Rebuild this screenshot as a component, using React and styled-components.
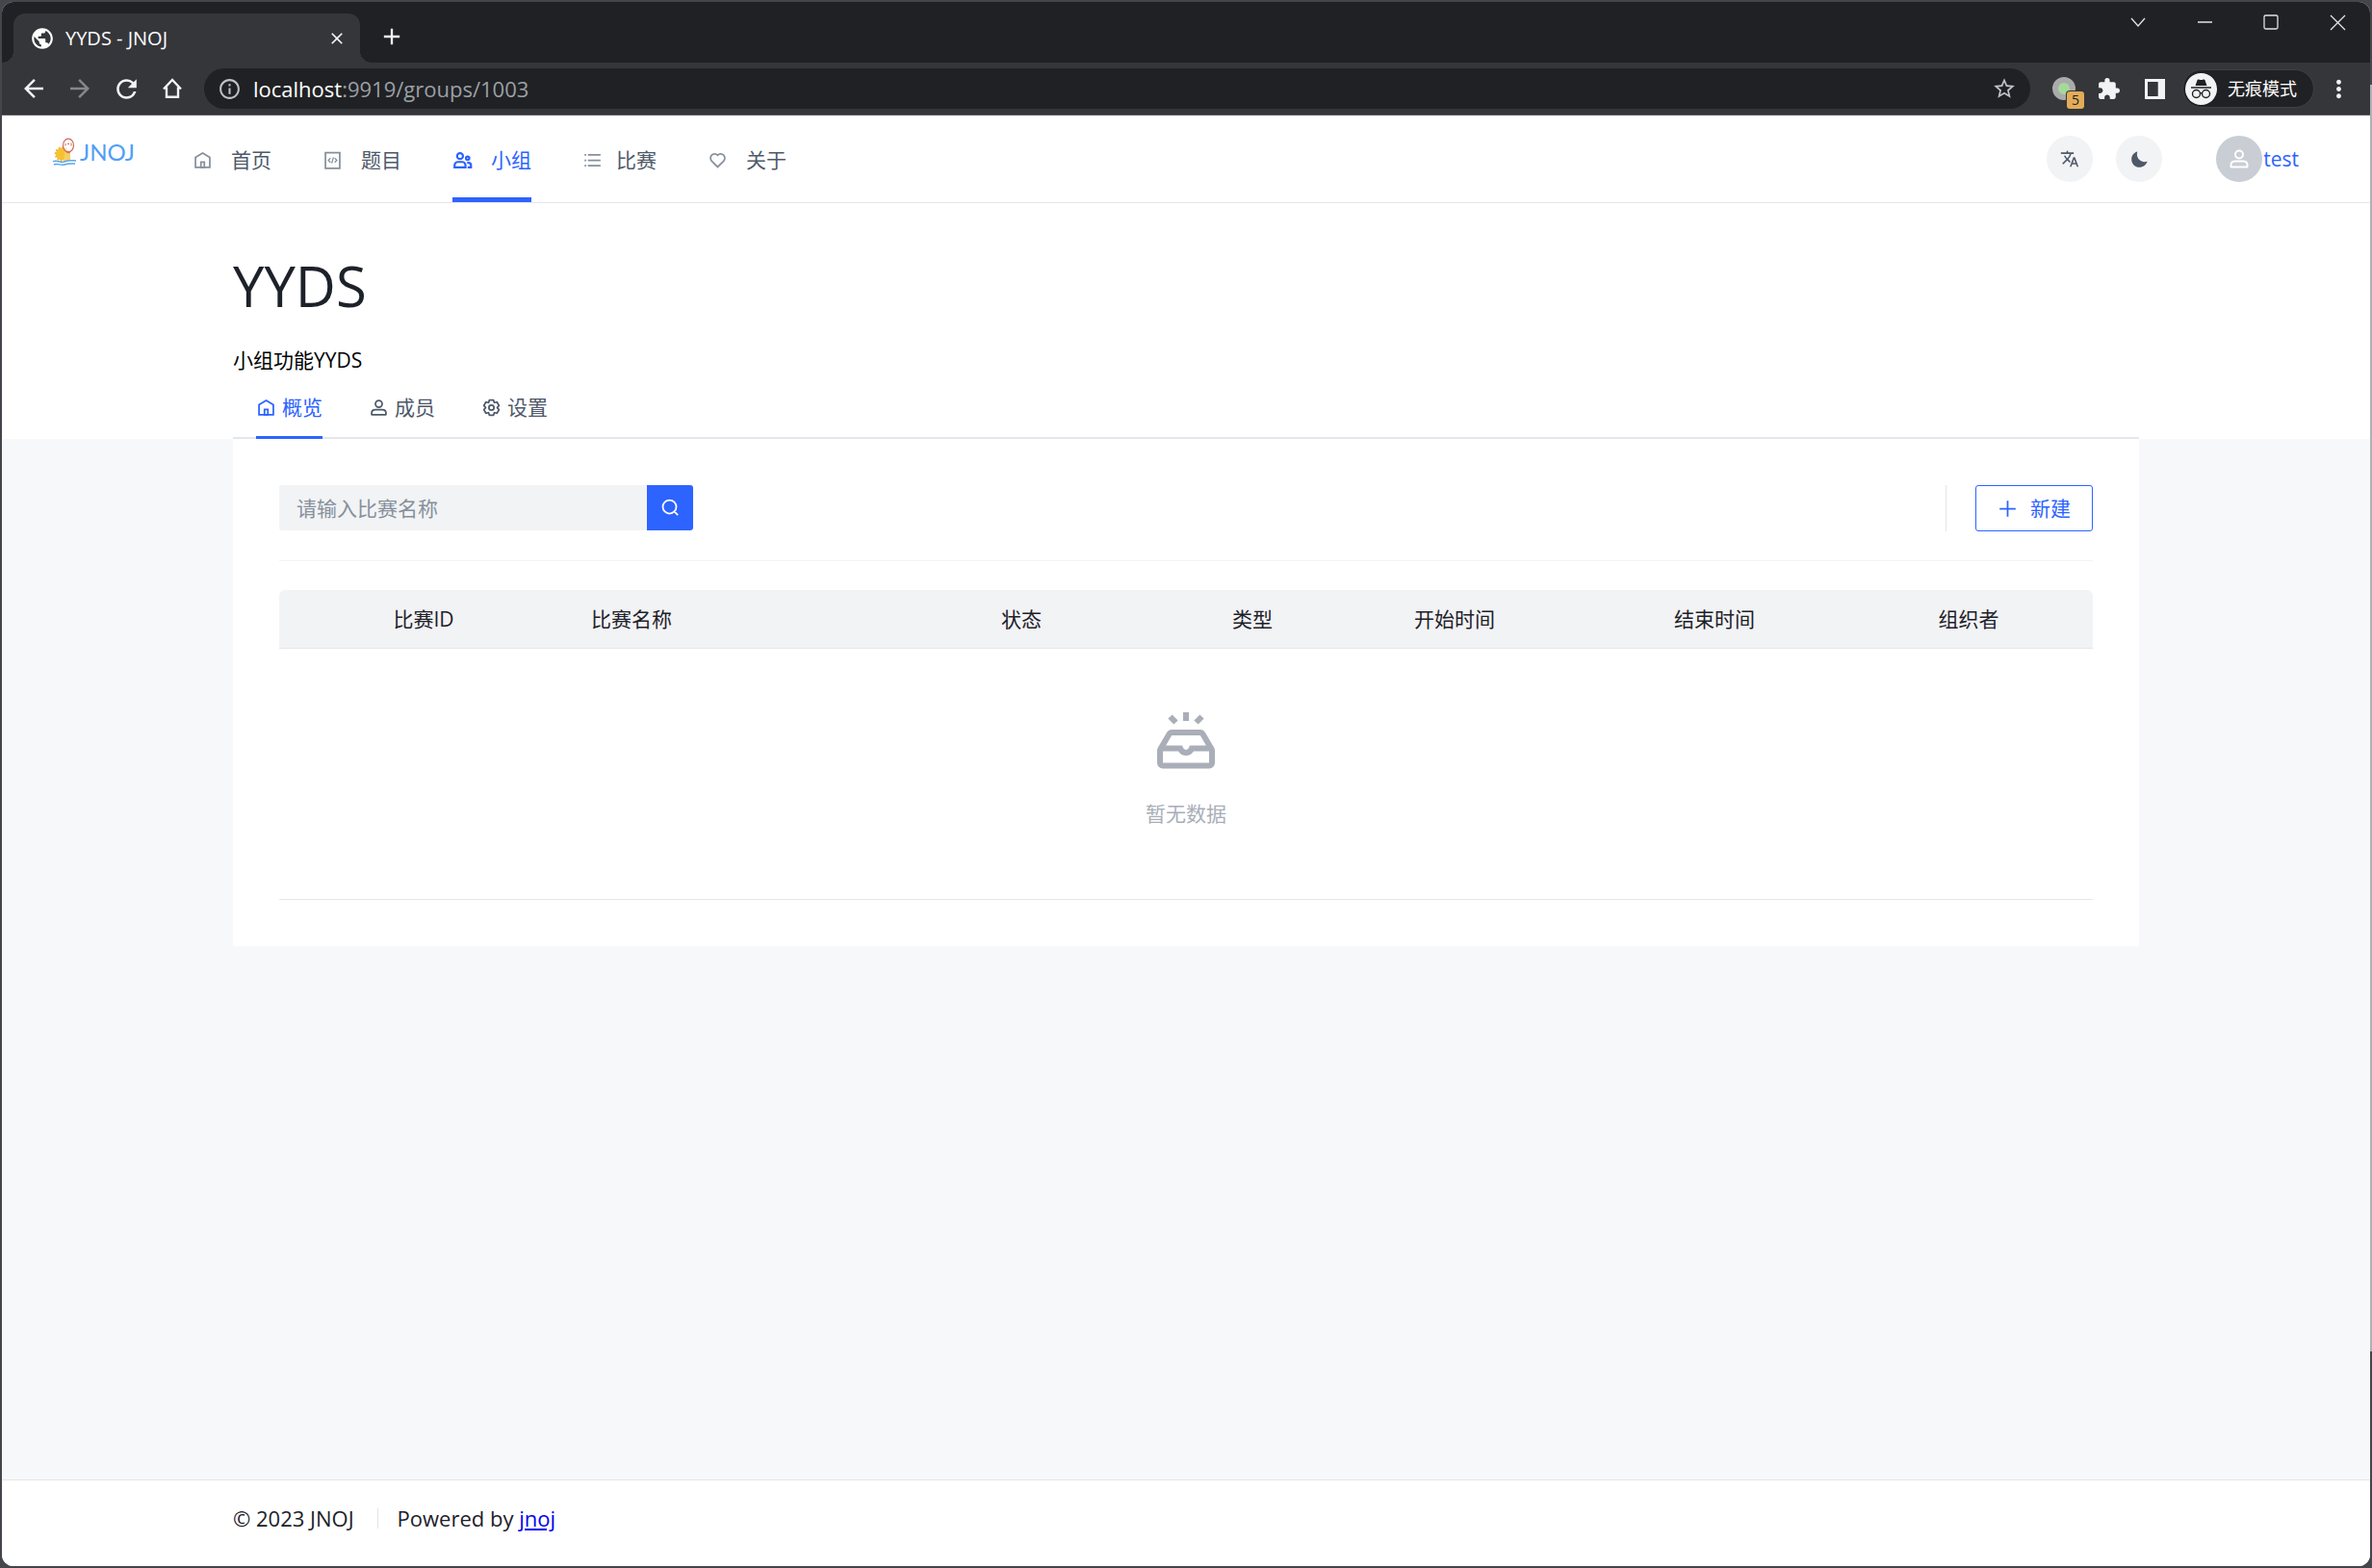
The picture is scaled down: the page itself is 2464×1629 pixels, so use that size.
import React, { useState } from 'react';
import styled, { createGlobalStyle } from 'styled-components';
import {
  MdArrowBack, MdArrowForward, MdRefresh, MdInfoOutline, MdStarBorder,
  MdExtension, MdPublic, MdTranslate, MdMoreVert, MdClose, MdAdd,
} from 'react-icons/md';

const GlobalStyle = createGlobalStyle`
  *, *::before, *::after { box-sizing: border-box; }
  body {
    margin: 0;
    background: #45464b;
    color: #1d2129;
    font-family: "Open Sans", "Noto Sans CJK SC", sans-serif;
    font-size: 21px;
    line-height: 32px;
  }
  button, input { font: inherit; color: inherit; border: 0; padding: 0; margin: 0; background: none; }
  button { cursor: pointer; }
  a { color: inherit; text-decoration: none; }
  svg { display: block; flex: none; }
  h1, p, ul { margin: 0; padding: 0; font-weight: 400; }
  ul { list-style: none; }
`;

/* ---------- window frame ---------- */

const Frame = styled.div`
  min-height: 100vh;
  padding: 2px;
  display: flex;
  background:
    linear-gradient(#47484c 88px, #b0b1b3 88px, #b0b1b3 1404px, #45464b 1404px) right top / 2px 100% no-repeat,
    #45464b;
`;

const BrowserWindow = styled.div`
  flex: 1;
  min-width: 0;
  display: flex;
  flex-direction: column;
  border-radius: 12px;
  overflow: hidden;
  background: #f7f8fa;
`;

const TabStrip = styled.div`
  height: 63px;
  padding: 12px 0 0 12px;
  display: flex;
  align-items: flex-start;
  background: #202124;
  color: #fff;
`;

const BrowserTab = styled.div`
  position: relative;
  width: 360px;
  height: 51px;
  padding: 0 14px 0 17px;
  display: flex;
  align-items: center;
  gap: 11px;
  border-radius: 12px 12px 0 0;
  background: #35363a;
  font-size: 20px;
  &::before, &::after {
    content: "";
    position: absolute;
    bottom: 0;
    width: 12px;
    height: 12px;
  }
  &::before {
    right: 100%;
    background: radial-gradient(circle at 0 0, #202124 12px, #35363a 12px);
  }
  &::after {
    left: 100%;
    background: radial-gradient(circle at 100% 0, #202124 12px, #35363a 12px);
  }
`;

const TabTitle = styled.span`
  flex: 1;
`;

const ChromeButton = styled.button`
  width: ${(p) => p.$width || 48}px;
  height: ${(p) => p.$height || 48}px;
  display: flex;
  align-items: center;
  justify-content: center;
  color: ${(p) => (p.$dim ? '#86878a' : '#f1f3f4')};
`;

const NewTab = styled(ChromeButton)`
  margin-left: 9px;
`;

const WindowControls = styled.div`
  margin-left: auto;
  display: flex;
  align-items: center;
  height: 18px;
`;

const Toolbar = styled.div`
  height: 55px;
  padding: 0 16px 0 9px;
  display: flex;
  align-items: center;
  background: #35363a;
  border-bottom: 1px solid #5b5c60;
`;

const AddressBar = styled.div`
  flex: 1;
  height: 42px;
  margin: 0 14px 0 9px;
  padding: 0 14px;
  display: flex;
  align-items: center;
  gap: 12px;
  border-radius: 21px;
  background: #202124;
  color: #9aa0a6;
  font-size: 22px;
  svg { color: #bdc1c6; }
`;

const Address = styled.span`
  flex: 1;
  b { font-weight: 400; color: #fff; }
`;

const Extension = styled.span`
  position: relative;
  width: 24px;
  height: 24px;
  margin: 0 10px 0 9px;
  border: 6px solid #aaa;
  border-radius: 50%;
  background: #a5d99b;
`;

const ExtensionBadge = styled.span`
  position: absolute;
  left: 9px;
  top: 9px;
  width: 18px;
  height: 18px;
  border-radius: 3px;
  background: #e3ac58;
  box-shadow: 0 0 0 1px #35363a;
  color: #202124;
  font-size: 14px;
  line-height: 18px;
  text-align: center;
`;

const ProfilePill = styled.button`
  height: 40px;
  margin: 0 8px 0 5px;
  padding: 0 17px 0 2px;
  display: flex;
  align-items: center;
  gap: 11px;
  border: 1px solid #3f4045;
  border-radius: 20px;
  background: #202124;
  color: #fff;
  font-size: 18px;
  white-space: nowrap;
`;

/* ---------- site header ---------- */

const SiteHeader = styled.header`
  height: 91px;
  padding: 0 74px 0 52px;
  display: flex;
  align-items: center;
  background: #fff;
  border-bottom: 1px solid #e5e6eb;
`;

const Logo = styled.a`
  width: 88px;
  height: 56px;
  align-self: flex-start;
  margin: 10px 58px 0 0;
  display: flex;
  align-items: center;
  gap: 2px;
  color: #4f9ef8;
  font-family: Lato, sans-serif;
  font-size: 24px;
`;

const Nav = styled.nav`
  display: flex;
  align-self: stretch;
  gap: 53px;
`;

const NavLink = styled.a`
  display: flex;
  align-items: center;
  gap: ${(p) => (p.$tight ? 14 : 19)}px;
  padding-top: 7px;
  border-bottom: 5px solid ${(p) => (p.$active ? '#2d63ff' : 'transparent')};
  color: ${(p) => (p.$active ? '#2d63ff' : '#4e5969')};
  svg { color: ${(p) => (p.$active ? '#2d63ff' : '#86909c')}; }
`;

const HeaderTools = styled.div`
  margin-left: auto;
  display: flex;
  align-items: center;
  gap: 24px;
`;

const RoundButton = styled.button`
  width: 48px;
  height: 48px;
  display: flex;
  align-items: center;
  justify-content: center;
  border-radius: 50%;
  background: #f2f3f5;
  color: #4e5969;
`;

const UserLink = styled.a`
  margin-left: 32px;
  display: flex;
  align-items: center;
  gap: 1px;
  color: #2d63ff;
`;

const Avatar = styled.span`
  width: 48px;
  height: 48px;
  display: flex;
  align-items: center;
  justify-content: center;
  border-radius: 50%;
  background: #c9cdd4;
  color: #fff;
`;

/* ---------- page ---------- */

const Container = styled.div`
  width: 100%;
  max-width: 1980px;
  margin: 0 auto;
`;

const GroupHead = styled.section`
  background: #fff;
  padding-top: 48px;
`;

const GroupTitle = styled.h1`
  font-size: 58px;
  line-height: 76px;
`;

const GroupNote = styled.p`
  margin-top: 23px;
  color: #000;
`;

const Tabs = styled.div`
  height: 66px;
  padding: 0 24px;
  display: flex;
  gap: 48px;
  box-shadow: inset 0 -2px #e5e6eb;
`;

const TabButton = styled.button`
  display: flex;
  align-items: center;
  gap: 6px;
  padding-top: 3px;
  border-bottom: 3px solid ${(p) => (p.$active ? '#2d63ff' : 'transparent')};
  color: ${(p) => (p.$active ? '#2d63ff' : '#4e5969')};
`;

const Panel = styled.main`
  padding: 48px;
  background: #fff;
`;

const Actions = styled.div`
  display: flex;
  justify-content: space-between;
  padding-bottom: 30px;
  border-bottom: 1px solid #f2f3f5;
`;

const SearchForm = styled.form`
  width: 430px;
  height: 47px;
  display: flex;
`;

const SearchInput = styled.input`
  flex: 1;
  min-width: 0;
  padding: 0 18px;
  border-radius: 3px 0 0 3px;
  background: #f2f3f5;
  outline: none;
  &::placeholder { color: #86909c; opacity: 1; }
`;

const SearchButton = styled.button`
  width: 48px;
  display: flex;
  align-items: center;
  justify-content: center;
  border-radius: 0 3px 3px 0;
  background: #2d63ff;
  color: #fff;
`;

const CreateArea = styled.div`
  padding-left: 30px;
  border-left: 1px solid #e5e6eb;
`;

const CreateButton = styled.button`
  height: 48px;
  padding: 0 22px;
  display: flex;
  align-items: center;
  gap: 13px;
  border: 1px solid #2d63ff;
  border-radius: 3px;
  color: #2d63ff;
`;

const Table = styled.table`
  width: 100%;
  margin-top: 30px;
  table-layout: fixed;
  border-collapse: separate;
  border-spacing: 0;
`;

const HeadCell = styled.th`
  height: 61px;
  padding: 0 24px;
  background: #f2f3f5;
  border-bottom: 1px solid #e5e6eb;
  font-weight: 400;
  text-align: ${(p) => (p.$left ? 'left' : 'center')};
  &:first-child { border-top-left-radius: 6px; }
  &:last-child { border-top-right-radius: 6px; }
`;

const EmptyCell = styled.td`
  height: 261px;
  padding: 60px 0 0;
  border-bottom: 1px solid #e5e6eb;
  color: #a9aeb8;
  vertical-align: top;
`;

const Empty = styled.div`
  display: flex;
  flex-direction: column;
  align-items: center;
  gap: 23px;
`;

const Footer = styled.footer`
  margin-top: auto;
  height: 90px;
  padding-top: 23px;
  background: #fff;
  border-top: 1px solid #e5e6eb;
  font-size: 22px;
`;

const FooterRow = styled(Container)`
  display: flex;
  align-items: center;
`;

const FooterDivider = styled.span`
  width: 1px;
  height: 21px;
  margin: 0 20px 0 24px;
  background: #e5e6eb;
`;

const FooterLink = styled.a`
  color: #0000ee;
  text-decoration: underline;
`;

/* ---------- icons ---------- */

const Line = ({ size = 21, children, stroke = 4 }) => (
  <svg width={size} height={size} viewBox="0 0 48 48" fill="none" stroke="currentColor" strokeWidth={stroke} aria-hidden="true">
    {children}
  </svg>
);

const HomeIcon = () => <Line><path d="M7 17 24 7l17 10v24H7V17Z" /><path d="M20 28h8v13h-8V28Z" /></Line>;
const CodeIcon = () => (
  <Line><path d="M7 6h34v37H7z" /><path strokeWidth="3" d="m19 19-5 5 5 5M29 19l5 5-5 5M26 17l-4 14" /></Line>
);
const GroupIcon = () => (
  <Line stroke={5}>
    <circle cx="18" cy="14" r="7" /><circle cx="36" cy="19" r="4" />
    <path d="M5 36a8 8 0 0 1 8-8h10a8 8 0 0 1 8 8v5H5v-5ZM35 30h3a6 6 0 0 1 6 6v5h-8" />
  </Line>
);
const ListIcon = () => <Line><path d="M13 24h30M5 11h4m4 26h30M13 11h30M5 24h4M5 37h4" /></Line>;
const HeartIcon = () => (
  <Line><path d="M38.083 11.912a9.802 9.802 0 0 1 0 13.863L24 39.858 9.917 25.775A9.802 9.802 0 1 1 23.78 11.912l.22.22.22-.22a9.802 9.802 0 0 1 13.863 0Z" /></Line>
);
const UserIcon = ({ size }) => (
  <Line size={size}>
    <path d="M7 37c0-4.97 4.03-8 9-8h16c4.97 0 9 3.03 9 8v3a1 1 0 0 1-1 1H8a1 1 0 0 1-1-1v-3Z" />
    <circle cx="24" cy="15" r="8" />
  </Line>
);
const GearIcon = () => (
  <Line>
    <path d="M18.797 6.732A1 1 0 0 1 19.76 6h8.48a1 1 0 0 1 .964.732l1.285 4.628a1 1 0 0 0 1.213.7l4.651-1.2a1 1 0 0 1 1.116.468l4.24 7.344a1 1 0 0 1-.153 1.2L38.193 23.3a1 1 0 0 0 0 1.402l3.364 3.427a1 1 0 0 1 .153 1.2l-4.24 7.344a1 1 0 0 1-1.116.468l-4.65-1.2a1 1 0 0 0-1.214.7l-1.285 4.628a1 1 0 0 1-.964.732h-8.48a1 1 0 0 1-.963-.732L17.51 36.64a1 1 0 0 0-1.213-.7l-4.65 1.2a1 1 0 0 1-1.116-.468l-4.24-7.344a1 1 0 0 1 .153-1.2L9.809 24.7a1 1 0 0 0 0-1.402l-3.364-3.427a1 1 0 0 1-.153-1.2l4.24-7.344a1 1 0 0 1 1.116-.468l4.65 1.2a1 1 0 0 0 1.213-.7l1.286-4.628Z" />
    <circle cx="24" cy="24" r="6" />
  </Line>
);
const SearchIcon = () => (
  <Line><path d="M33.072 33.071c6.248-6.248 6.248-16.379 0-22.627-6.249-6.249-16.38-6.249-22.628 0-6.248 6.248-6.248 16.379 0 22.627 6.248 6.248 16.38 6.248 22.628 0Zm0 0 8.485 8.485" /></Line>
);
const PlusIcon = () => <Line><path d="M5 24h38M24 5v38" /></Line>;
const EmptyIcon = () => (
  <Line size={72}>
    <path d="M24 4v6m7 1 4-4m-18 4-4-4m28.500 22H28s-1 3-4 3-4-3-4-3H6.500M40 41H8a2 2 0 0 1-2-2v-8.460a2 2 0 0 1 .272-1.007l6.150-10.540A2 2 0 0 1 14.148 18H33.850a2 2 0 0 1 1.728.992l6.149 10.541A2 2 0 0 1 42 30.541V39a2 2 0 0 1-2 2Z" />
  </Line>
);
const MoonIcon = () => (
  <svg width="21" height="21" viewBox="0 0 48 48" fill="currentColor" aria-hidden="true">
    <path d="M42.108 29.769c.124-.387-.258-.736-.645-.613A17.99 17.99 0 0 1 36 30c-9.941 0-18-8.059-18-18 0-1.904.296-3.74.844-5.463.123-.387-.226-.769-.613-.645C10.558 8.334 5 15.518 5 24c0 10.493 8.507 19 19 19 8.482 0 15.666-5.558 18.108-13.231Z" />
  </svg>
);
const BrowserHomeIcon = () => (
  <svg width="20" height="22" viewBox="0 0 20 22" fill="none" stroke="currentColor" strokeWidth="2.4" aria-hidden="true">
    <path d="M1 11.5 10 2l9 9.5M4 9.5V19.800h12V9.500" />
  </svg>
);
const SidePanelIcon = () => (
  <svg width="21" height="21" viewBox="0 0 21 21" aria-hidden="true">
    <path fill="currentColor" fillRule="evenodd" d="M0 0h21v21H0zM3 3v15h11V3z" />
    <path fill="#6b6c70" d="M13 3h1v15h-1z" />
  </svg>
);
const IncognitoIcon = () => (
  <svg width="33" height="33" viewBox="0 0 33 33" aria-hidden="true">
    <circle cx="16.500" cy="16.500" r="16.500" fill="#f1f3f4" />
    <path fill="#202124" d="M12.500 7.200c.2-.7 1-.9 1.600-.6l1.400.5h2l1.400-.5c.6-.3 1.400-.1 1.600.6l2 5.800h-12zM6 14.200h21v1.500H6z" />
    <g fill="none" stroke="#202124" strokeWidth="1.400">
      <circle cx="11.500" cy="21.500" r="4" /><circle cx="21.500" cy="21.500" r="4" />
      <path d="M15.500 21c.7-.5 1.300-.5 2 0" />
    </g>
  </svg>
);
const ControlIcon = ({ d, square }) => (
  <svg width="18" height="18" viewBox="0 0 18 18" fill="none" stroke="#e4e4e5" strokeWidth="1.300" aria-hidden="true">
    {square ? <rect x="2" y="2" width="14" height="14" rx="1.500" /> : <path d={d} />}
  </svg>
);
const LogoMark = () => (
  <svg width="27" height="30" viewBox="0 0 27 30" aria-hidden="true">
    <circle cx="10.500" cy="17" r="6.500" fill="#f6c033" />
    <circle cx="10.500" cy="17" r="6.800" fill="none" stroke="#f3b62b" strokeWidth="2" strokeDasharray="2 1.500" />
    <path d="M13 15h6v9h-7z" fill="#f6cf62" />
    <ellipse cx="17" cy="8" rx="5.500" ry="6.800" fill="#fff" fillOpacity=".65" stroke="#d0695e" strokeWidth="1.200" />
    <path d="M14 6v2.500M16 6.500h2M20 5.500v3M15 15c1 1 3 1 4 0" stroke="#d0695e" fill="none" />
    <path d="M1 25c4-3 7 2 12 0s8-1 12-1M2 28c4-2 7 1.500 11 0s7-1 11-1" fill="none" stroke="#58a6ee" strokeWidth="1.500" />
  </svg>
);

/* ---------- data ---------- */

const navItems = [
  { label: '首页', Icon: HomeIcon },
  { label: '题目', Icon: CodeIcon },
  { label: '小组', Icon: GroupIcon, active: true },
  { label: '比赛', Icon: ListIcon, tight: true },
  { label: '关于', Icon: HeartIcon },
];

const tabs = [
  { label: '概览', Icon: HomeIcon },
  { label: '成员', Icon: UserIcon },
  { label: '设置', Icon: GearIcon },
];

const columns = [
  { label: '比赛ID', width: 300 },
  { label: '比赛名称', width: 306, left: true },
  { label: '状态', width: 330 },
  { label: '类型', width: 150 },
  { label: '开始时间', width: 270 },
  { label: '结束时间', width: 270 },
  { label: '组织者', width: 258 },
];
const totalWidth = columns.reduce((sum, c) => sum + c.width, 0);

const controls = [
  { label: '搜索标签页', d: 'M2 5l7 8 7-8' },
  { label: '最小化', d: 'M2 9h15' },
  { label: '最大化', square: true },
  { label: '关闭', d: 'M2 2l15 15M17 2L2 17' },
];

function BrowserChrome() {
  return (
    <>
      <TabStrip>
        <BrowserTab>
          <MdPublic size={26} />
          <TabTitle>YYDS - JNOJ</TabTitle>
          <ChromeButton $width={20} aria-label="关闭标签页"><MdClose size={20} /></ChromeButton>
        </BrowserTab>
        <NewTab aria-label="新标签页"><MdAdd size={28} /></NewTab>
        <WindowControls>
          {controls.map((c) => (
            <ChromeButton key={c.label} $width={69} aria-label={c.label}>
              <ControlIcon {...c} />
            </ChromeButton>
          ))}
        </WindowControls>
      </TabStrip>
      <Toolbar>
        <ChromeButton aria-label="后退"><MdArrowBack size={30} /></ChromeButton>
        <ChromeButton $dim aria-label="前进"><MdArrowForward size={30} /></ChromeButton>
        <ChromeButton aria-label="刷新"><MdRefresh size={31} /></ChromeButton>
        <ChromeButton aria-label="主页"><BrowserHomeIcon /></ChromeButton>
        <AddressBar>
          <MdInfoOutline size={25} />
          <Address><b>localhost</b>:9919/groups/1003</Address>
          <MdStarBorder size={26} />
        </AddressBar>
        <Extension><ExtensionBadge>5</ExtensionBadge></Extension>
        <ChromeButton aria-label="扩展程序"><MdExtension size={25} /></ChromeButton>
        <ChromeButton aria-label="侧边栏"><SidePanelIcon /></ChromeButton>
        <ProfilePill><IncognitoIcon />无痕模式</ProfilePill>
        <ChromeButton $width={34} aria-label="菜单"><MdMoreVert size={29} /></ChromeButton>
      </Toolbar>
    </>
  );
}

export default function App() {
  const [active, setActive] = useState('概览');
  return (
    <>
      <GlobalStyle />
      <Frame>
        <BrowserWindow>
          <BrowserChrome />
          <SiteHeader>
            <Logo href="#"><LogoMark />JNOJ</Logo>
            <Nav>
              {navItems.map(({ label, Icon, active: on, tight }) => (
                <NavLink key={label} href="#" $active={on} $tight={tight}><Icon />{label}</NavLink>
              ))}
            </Nav>
            <HeaderTools>
              <RoundButton aria-label="语言"><MdTranslate size={20} /></RoundButton>
              <RoundButton aria-label="深色模式"><MoonIcon /></RoundButton>
              <UserLink href="#"><Avatar><UserIcon size={24} /></Avatar>test</UserLink>
            </HeaderTools>
          </SiteHeader>
          <GroupHead>
            <Container>
              <GroupTitle>YYDS</GroupTitle>
              <GroupNote>小组功能YYDS</GroupNote>
              <Tabs role="tablist">
                {tabs.map(({ label, Icon }) => (
                  <TabButton
                    key={label}
                    role="tab"
                    aria-selected={active === label}
                    $active={active === label}
                    onClick={() => setActive(label)}
                  >
                    <Icon />{label}
                  </TabButton>
                ))}
              </Tabs>
            </Container>
          </GroupHead>
          <Container>
            <Panel>
              <Actions>
                <SearchForm onSubmit={(e) => e.preventDefault()}>
                  <SearchInput type="text" aria-label="比赛名称" placeholder="请输入比赛名称" />
                  <SearchButton aria-label="搜索"><SearchIcon /></SearchButton>
                </SearchForm>
                <CreateArea>
                  <CreateButton type="button"><PlusIcon />新建</CreateButton>
                </CreateArea>
              </Actions>
              <Table>
                <colgroup>
                  {columns.map((c) => (
                    <col key={c.label} style={{ width: `${(c.width / totalWidth) * 100}%` }} />
                  ))}
                </colgroup>
                <thead>
                  <tr>
                    {columns.map((c) => <HeadCell key={c.label} $left={c.left}>{c.label}</HeadCell>)}
                  </tr>
                </thead>
                <tbody>
                  <tr>
                    <EmptyCell colSpan={columns.length}>
                      <Empty><EmptyIcon />暂无数据</Empty>
                    </EmptyCell>
                  </tr>
                </tbody>
              </Table>
            </Panel>
          </Container>
          <Footer>
            <FooterRow>
              <span>© 2023 JNOJ</span>
              <FooterDivider />
              <span>Powered by <FooterLink href="#">jnoj</FooterLink></span>
            </FooterRow>
          </Footer>
        </BrowserWindow>
      </Frame>
    </>
  );
}
